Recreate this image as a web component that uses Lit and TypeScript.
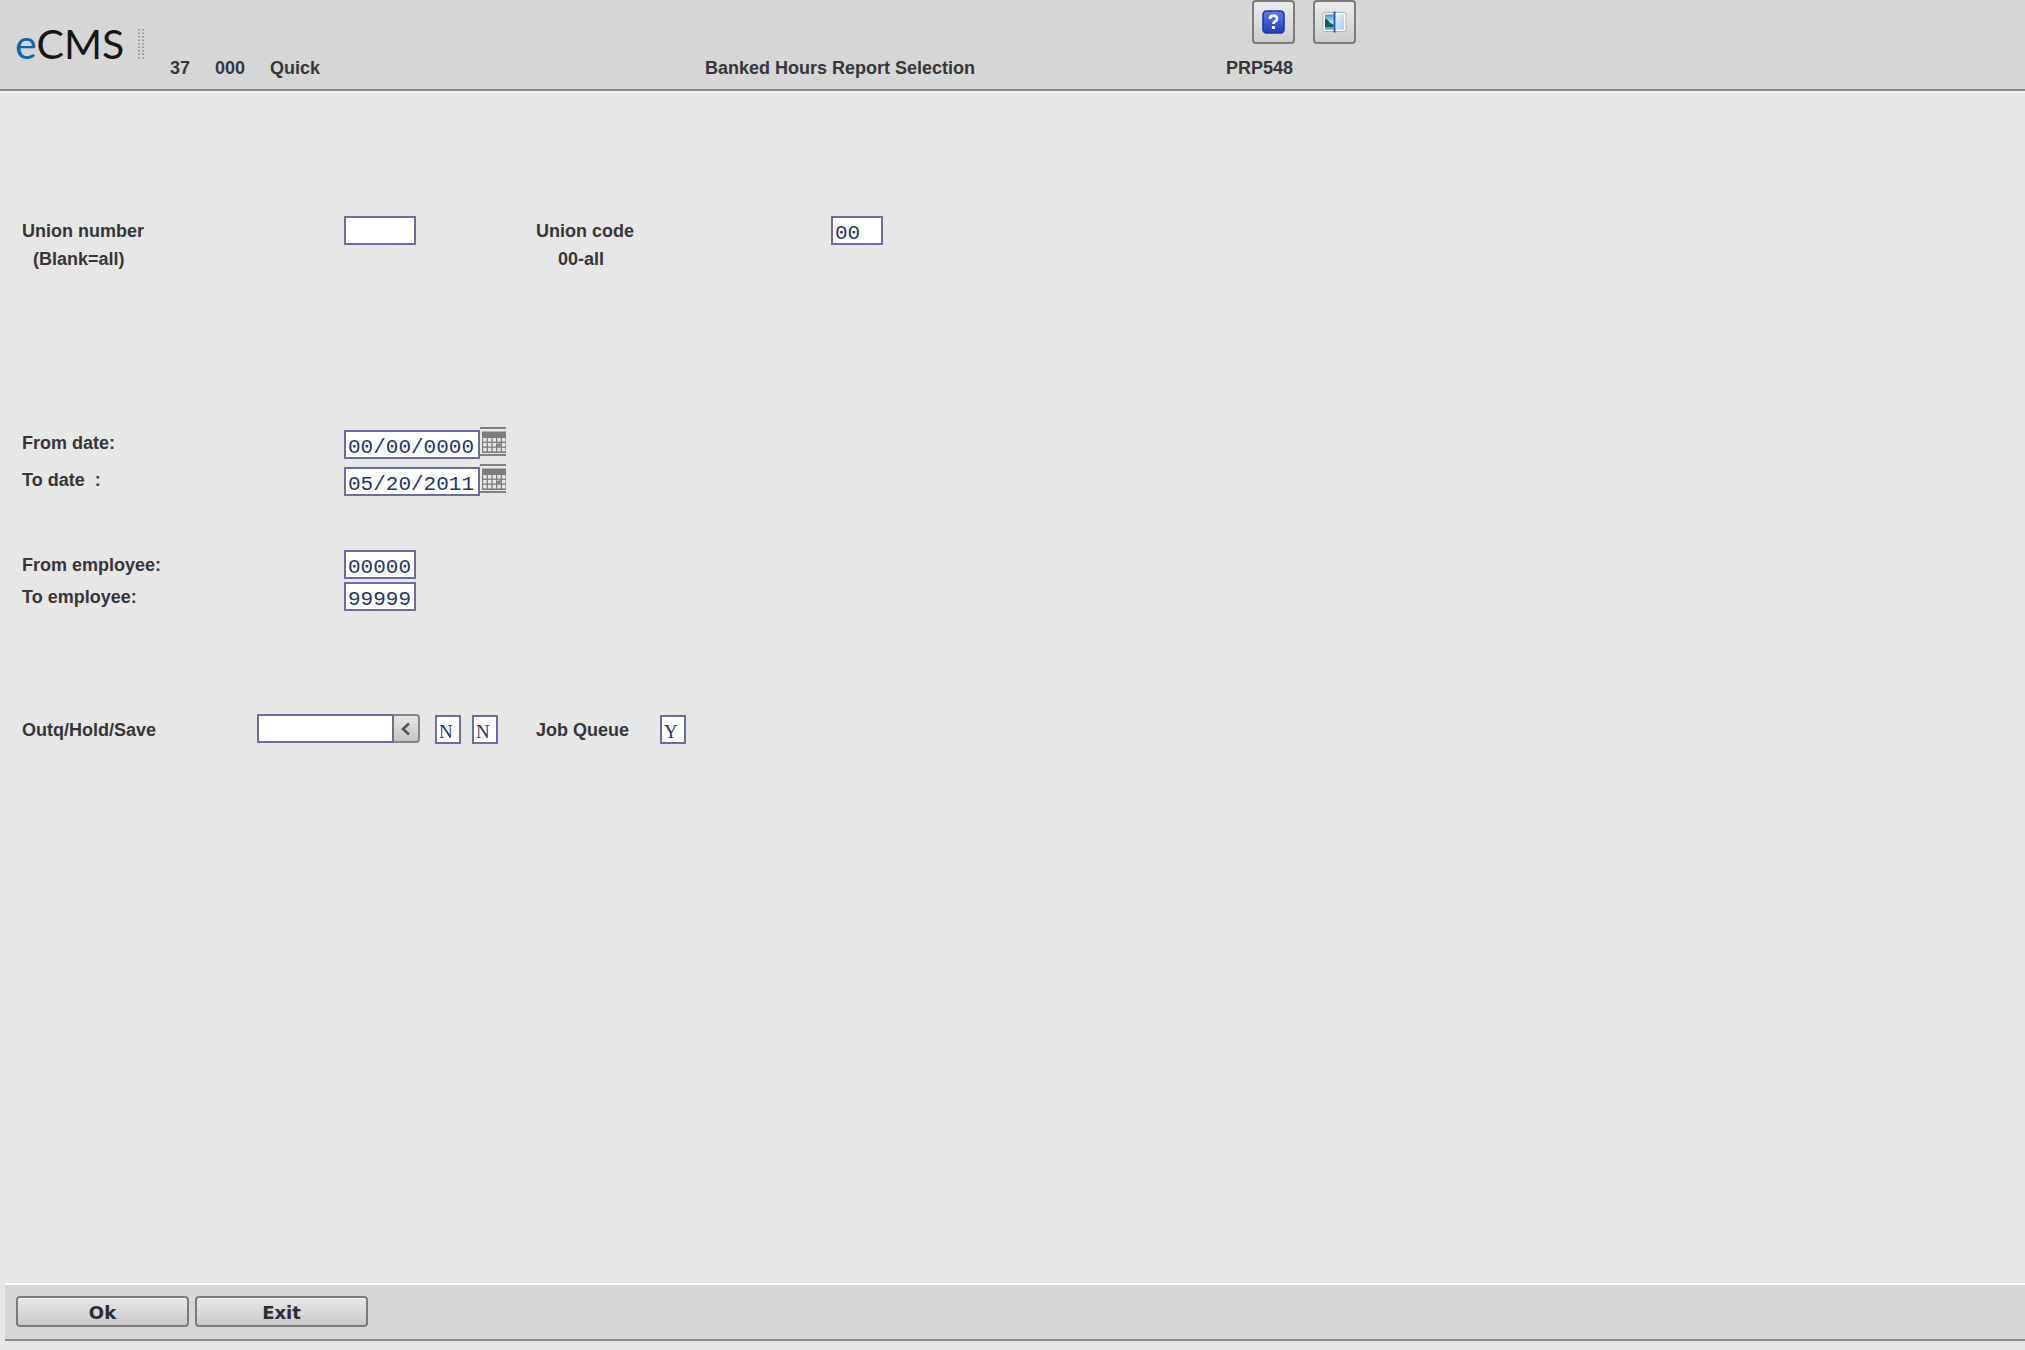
import { LitElement, html, css, svg } from "lit";
import { customElement } from "lit/decorators.js";

@customElement("calendar-button")
class CalendarButton extends LitElement {
  static properties = { label: { type: String } };
  declare label: string;

  static styles = css`
    :host {
      display: block;
      align-self: start;
    }
    .button {
      display: block;
      width: 26px;
      height: 30px;
      padding: 0;
      border: 0;
      background: none;
    }
    .icon {
      display: block;
    }
  `;

  render() {
    const xs = [0, 1, 2, 3, 4];
    const ys = [0, 1, 2];
    return html`<button class="button" type="button" aria-label=${this.label}>
      <svg class="icon" width="26" height="30" viewBox="0 0 26 30">
        <path d="M0 1h26M0 28h26" stroke="#808080" stroke-width="1.8" />
        <path d="M2 4.500h24v21.500H2z" fill="#7c7c7c" />
        ${ys.map((y) =>
          xs.map(
            (x) => svg`<rect x=${3.2 + x * 4.7} y=${11 + y * 4.9} width="3.4" height="3.6" fill="#e6e6e6" />`,
          ),
        )}
        <path d="M16.500 18.500l4-3.500v4.500h-4z" fill="#777" />
      </svg>
    </button>`;
  }
}

@customElement("app-root")
class AppRoot extends LitElement {
  static styles = css`
    :host {
      display: block;
      font: bold 18px/28px "Liberation Sans", Arial, sans-serif;
      color: #36363a;
    }
    .page {
      display: flex;
      flex-direction: column;
      box-sizing: border-box;
      min-height: 100vh;
      padding-bottom: 9px;
      background: #e7e7e7;
    }
    .header {
      display: grid;
      grid-template-columns: 155px 535px 521px auto;
      justify-content: start;
      align-items: end;
      padding: 0 15px 7px;
      background: #d6d6d6;
      border-bottom: 2px solid #8a8a8a;
      box-shadow: 0 2px 0 #efefef;
    }
    .brand {
      display: flex;
      align-items: center;
      gap: 14px;
      align-self: center;
      padding-top: 5px;
    }
    .logo {
      font: 41px/48px Lato, sans-serif;
      color: #151515;
    }
    .logo-e {
      color: #0a66a8;
    }
    .company {
      display: flex;
      gap: 25px;
    }
    .title {
      margin: 0;
      font: inherit;
    }
    .tools {
      display: flex;
      gap: 18px;
      padding: 0 0 10px 26px;
    }
    .tool {
      display: flex;
      align-items: center;
      justify-content: center;
      box-sizing: border-box;
      width: 43px;
      height: 44px;
      padding: 0;
      border: 2px solid #7b7b7b;
      border-radius: 4px;
      background: linear-gradient(#ececec, #cdcdcd);
    }
    .form {
      flex: 1;
      padding: 125px 22px 0;
    }
    .row {
      display: grid;
      grid-template-columns: 322px 192px 295px auto;
      justify-content: start;
      align-items: center;
    }
    .group {
      display: grid;
      gap: 3px;
      margin-bottom: 103px;
    }
    .group-union {
      gap: 0;
      margin-bottom: 154px;
    }
    .group-dates {
      gap: 5px;
      margin-bottom: 54px;
    }
    .hint {
      padding-left: 11px;
    }
    .code-hint {
      grid-column: 3;
      padding-left: 22px;
    }
    .code-label {
      grid-column: 3;
    }
    .date {
      display: flex;
      align-items: end;
      height: 32px;
    }
    .field {
      box-sizing: border-box;
      height: 29px;
      padding: 5px 2px 0;
      border: 2px solid #6c6ca2;
      border-radius: 0;
      background: #fff;
      color: #24346e;
      font: 21px/23px "Liberation Mono", monospace;
    }
    .w-flag {
      width: 26px;
      font: 19px/23px "Liberation Serif", serif;
    }
    .w-code {
      width: 52px;
    }
    .w-number {
      width: 72px;
    }
    .w-date {
      width: 136px;
    }
    .w-queue {
      width: 137px;
    }
    .output {
      display: flex;
      align-items: end;
      height: 30px;
    }
    .output-label {
      width: 235px;
    }
    .combo {
      display: flex;
      align-self: start;
      margin-right: 15px;
    }
    .drop {
      display: flex;
      align-items: center;
      justify-content: center;
      box-sizing: border-box;
      width: 26px;
      height: 29px;
      padding: 0;
      border: 2px solid #858585;
      border-left: 0;
      border-radius: 0 4px 4px 0;
      background: linear-gradient(#e6e6e6, #c6c6c6);
    }
    .save {
      margin-left: 11px;
    }
    .queue-label {
      width: 124px;
      margin-left: 38px;
    }
    .footer {
      display: flex;
      gap: 6px;
      margin-left: 5px;
      padding: 11px 11px 12px;
      border-top: 2px solid #fafafa;
      border-bottom: 2px solid #8c8c8c;
      background: #d6d6d6;
    }
    .action {
      box-sizing: border-box;
      width: 173px;
      height: 31px;
      padding: 2px 0 0;
      border: 2px solid #7b7b7b;
      border-radius: 4px;
      background: linear-gradient(#e8e8e8, #cacaca);
      box-shadow: inset 0 1px 0 #f6f6f6;
      color: #2c2c34;
      font: bold 18px/24px "DejaVu Sans", Verdana, sans-serif;
    }
  `;

  render() {
    return html`
      <div class="page">
        <header class="header">
          <div class="brand">
            <span class="logo"><span class="logo-e">e</span>CMS</span>
            <svg width="6" height="30" viewBox="0 0 6 30">
              <path d="M1 0v30M5 0v30" stroke="#999" stroke-width="2" stroke-dasharray="1.5 2" />
            </svg>
          </div>
          <div class="company"><span>37</span><span>000</span><span>Quick</span></div>
          <h1 class="title">Banked Hours Report Selection</h1>
          <div>
            <div class="tools">
              <button class="tool" type="button" aria-label="Help">
                <svg width="24" height="26" viewBox="0 0 24 26">
                  <defs>
                    <linearGradient id="blue" x2="0" y2="1">
                      <stop stop-color="#5b7bea" />
                      <stop offset="1" stop-color="#1c3ec4" />
                    </linearGradient>
                  </defs>
                  <rect x="1" y="2" width="21" height="22" rx="3.5" fill="url(#blue)" stroke="#2038a0" stroke-width="1.6" />
                  <path d="M8 10c0-4.500 7-4.500 7 0 0 2.500-3.600 2-3.600 5" fill="none" stroke="#fff" stroke-width="2.800" />
                  <path d="M9.900 17h3v3h-3z" fill="#fff" />
                </svg>
              </button>
              <button class="tool" type="button" aria-label="Split view">
                <svg width="26" height="24" viewBox="0 0 26 24">
                  <defs>
                    <linearGradient id="sky" x2="0" y2="1">
                      <stop stop-color="#3c8fc8" />
                      <stop offset="0.5" stop-color="#b8e2f4" />
                      <stop offset="1" stop-color="#3f8fc4" />
                    </linearGradient>
                    <linearGradient id="pale" x2="1" y2="1">
                      <stop stop-color="#e4f1fc" />
                      <stop offset="1" stop-color="#a4cdf2" />
                    </linearGradient>
                  </defs>
                  <rect x="1" y="2.500" width="23" height="19" rx="2" fill="#f6f9fb" stroke="#a9b6c0" />
                  <rect x="3" y="4.500" width="8.500" height="15" fill="url(#sky)" />
                  <path d="M3 8.500c3 0 4 5 8.500 6v2.500H3z" fill="#1c5a4c" />
                  <rect x="14" y="4.500" width="8" height="15" fill="url(#pale)" />
                  <path d="M12.500 1.500v21" stroke="#2455c0" stroke-width="2" />
                </svg>
              </button>
            </div>
            <div>PRP548</div>
          </div>
        </header>

        <main class="form">
          <div class="group group-union">
            <div class="row">
              <label for="union">Union number</label>
              <input id="union" class="field w-number" />
              <label class="code-label" for="code">Union code</label>
              <input id="code" class="field w-code" value="00" />
            </div>
            <div class="row">
              <span class="hint">(Blank=all)</span>
              <span class="code-hint">00-all</span>
            </div>
          </div>

          <div class="group group-dates">
            <div class="row">
              <label for="from-date">From date:</label>
              <div class="date">
                <input id="from-date" class="field w-date" value="00/00/0000" />
                <calendar-button label="Pick from date"></calendar-button>
              </div>
            </div>
            <div class="row">
              <label for="to-date">To date&nbsp; :</label>
              <div class="date">
                <input id="to-date" class="field w-date" value="05/20/2011" />
                <calendar-button label="Pick to date"></calendar-button>
              </div>
            </div>
          </div>

          <div class="group">
            <div class="row">
              <label for="from-employee">From employee:</label>
              <input id="from-employee" class="field w-number" value="00000" />
            </div>
            <div class="row">
              <label for="to-employee">To employee:</label>
              <input id="to-employee" class="field w-number" value="99999" />
            </div>
          </div>

          <div class="output">
            <label class="output-label" for="outq">Outq/Hold/Save</label>
            <div class="combo">
              <input id="outq" class="field w-queue" />
              <button class="drop" type="button" aria-label="Choose output queue">
                <svg width="12" height="14" viewBox="0 0 12 14">
                  <path d="M9 1.500L3 7l6 5.500" fill="none" stroke="#555" stroke-width="2.600" />
                </svg>
              </button>
            </div>
            <input class="field w-flag" aria-label="Hold" value="N" />
            <input class="field w-flag save" aria-label="Save" value="N" />
            <label class="queue-label" for="job-queue">Job Queue</label>
            <input id="job-queue" class="field w-flag" value="Y" />
          </div>
        </main>

        <footer class="footer">
          <button class="action" type="button">Ok</button>
          <button class="action" type="button">Exit</button>
        </footer>
      </div>
    `;
  }
}
